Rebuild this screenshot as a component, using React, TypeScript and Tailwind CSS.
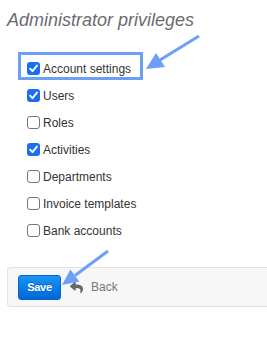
import { FaReply } from "react-icons/fa";

const items = [
  { label: "Account settings", checked: true },
  { label: "Users", checked: true },
  { label: "Roles", checked: false },
  { label: "Activities", checked: true },
  { label: "Departments", checked: false },
  { label: "Invoice templates", checked: false },
  { label: "Bank accounts", checked: false },
];

function Box({ checked }: { checked: boolean }) {
  if (checked) {
    return (
      <span className="flex h-[13px] w-[13px] shrink-0 items-center justify-center rounded-[3px] bg-[#1a6ff0]">
        <svg viewBox="0 0 12 12" className="h-[11px] w-[11px]">
          <path d="M2.3 6.2 L4.9 8.9 L9.8 2.8" fill="none" stroke="white" strokeWidth="2" strokeLinecap="round" strokeLinejoin="round" />
        </svg>
      </span>
    );
  }
  return <span className="h-[13px] w-[13px] shrink-0 rounded-[3px] border border-[#767676] bg-white" />;
}

export default function App() {
  return (
    <div className="relative h-[338px] w-[267px] overflow-hidden bg-white pl-[7px] font-['Liberation_Sans',Arial,sans-serif]">
      <h2 className="pt-[10px] text-[18px] leading-[21px] italic text-[#6b6b70]">Administrator privileges</h2>

      <ul className="mt-[24px] pl-[20px]">
        {items.map((it) => (
          <li key={it.label} className="flex h-[27px] items-center gap-[3px] text-[12px] text-[#333]">
            <Box checked={it.checked} />
            <span>{it.label}</span>
          </li>
        ))}
      </ul>

      <div className="mt-[23px] flex h-[40px] items-center gap-[9px] rounded-l-[4px] border border-r-0 border-[#e2e2e2] bg-[#f7f7f7] pl-[10px]">
        <button className="h-[25px] w-[43px] rounded-[3px] border border-[#0a62c9] bg-gradient-to-b from-[#1a94f2] to-[#0067d8] text-[11px] font-bold tracking-[-0.3px] text-white [text-shadow:0_-1px_0_rgba(0,0,0,0.25)]">
          Save
        </button>
        <span className="flex items-center gap-[8px] text-[12px] text-[#777]">
          <FaReply className="h-[13px] w-[13px] text-[#666]" />
          Back
        </span>
      </div>

      <div className="pointer-events-none absolute left-[18px] top-[52px] h-[28px] w-[125px] border-[3px] border-[#6d9ff6]" />

      <svg className="pointer-events-none absolute left-0 top-0" width="267" height="338">
        <line x1="199" y1="36" x2="160" y2="60" stroke="#6d9ff6" strokeWidth="3" />
        <polygon points="146,69 156,53 165,67" fill="#6d9ff6" />
        <line x1="108" y1="251" x2="75" y2="275.5" stroke="#6d9ff6" strokeWidth="3" />
        <polygon points="62,285 70.4,269.5 79.3,281.5" fill="#6d9ff6" />
      </svg>
    </div>
  );
}
